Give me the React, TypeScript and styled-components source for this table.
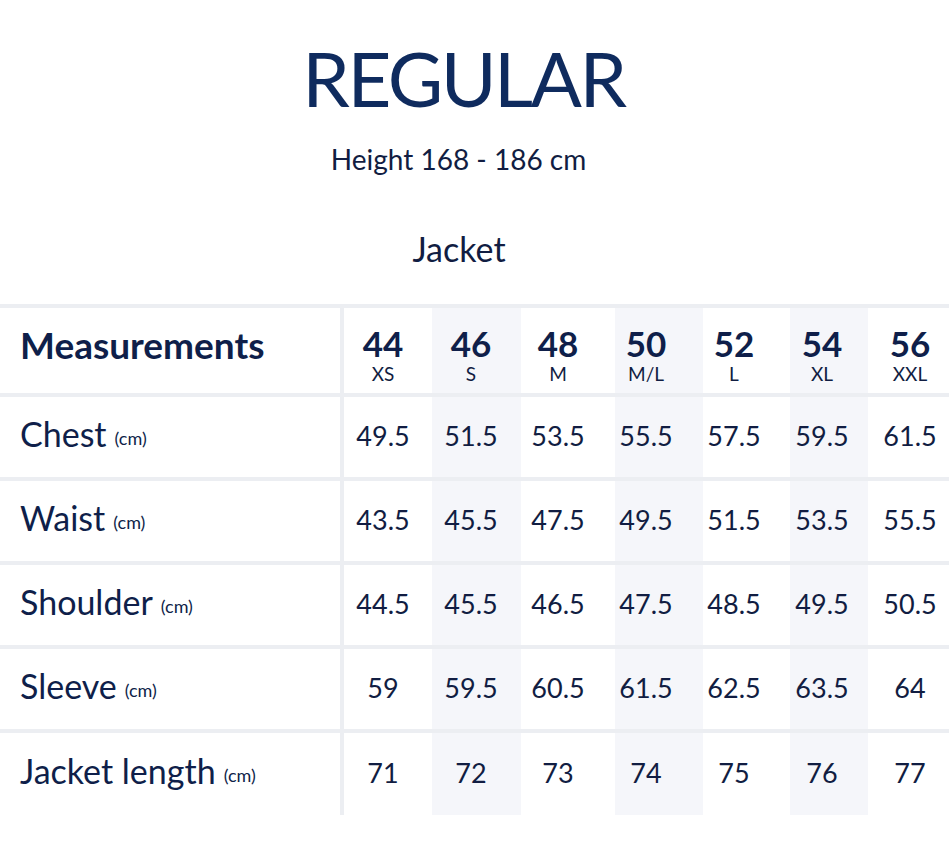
import styled, { createGlobalStyle } from "styled-components";

const GlobalStyle = createGlobalStyle`
  body {
    margin: 0;
    background: #ffffff;
    font-family: Lato, "Open Sans", sans-serif;
    color: #111d42;
  }
`;

const Page = styled.div`
  width: 949px;
  height: 868px;
  overflow: hidden;
  background: #ffffff;
`;

const Heading = styled.header`
  display: flex;
  flex-direction: column;
  align-items: center;
  padding-top: 40px;
`;

const Title = styled.h1`
  margin: 0 22px 0 0;
  font-size: 76px;
  font-weight: 400;
  letter-spacing: -2.5px;
  line-height: 1;
  color: #0f2b5e;
`;

const Subtitle = styled.div`
  margin: 29px 32px 0 0;
  font-size: 28px;
  line-height: 1;
`;

const Section = styled.h2`
  margin: 59px 31px 0 0;
  font-size: 34px;
  font-weight: 400;
  line-height: 1;
`;

const Table = styled.div`
  margin-top: 38px;
  display: flex;
  flex-direction: column;
`;

const COLS = "340px 4px 88px 89px 94px 88px 87px 78px 81px";

const Row = styled.div<{ $height: number }>`
  display: grid;
  grid-template-columns: ${COLS};
  height: ${(p) => p.$height}px;
  border-top: 4px solid #eceef2;
`;

const LabelCell = styled.div<{ $bold?: boolean }>`
  display: flex;
  align-items: center;
  padding: 0 0 ${(p) => (p.$bold ? 12 : 8)}px 20px;
  font-size: ${(p) => (p.$bold ? 37 : 34)}px;
  font-weight: ${(p) => (p.$bold ? 700 : 400)};
  color: #0f1f4a;
`;

const Unit = styled.span`
  font-size: 18px;
  margin-left: 8px;
  align-self: center;
  padding-top: 10px;
`;

const Divider = styled.div`
  background: #eceef2;
`;

const Cell = styled.div<{ $shade: boolean; $shift: number }>`
  display: flex;
  flex-direction: column;
  align-items: center;
  justify-content: center;
  background: ${(p) => (p.$shade ? "#f5f6fa" : "transparent")};
  padding-right: ${(p) => Math.max(0, -p.$shift * 2)}px;
  padding-left: ${(p) => Math.max(0, p.$shift * 2)}px;
  padding-bottom: 3px;
  font-size: 27px;
`;

const SizeCell = styled(Cell)`
  padding-top: 11px;
`;

const SizeNum = styled.div`
  font-size: 35px;
  font-weight: 700;
  line-height: 1;
  color: #0f1f4a;
`;

const SizeName = styled.div`
  margin-top: 3px;
  font-size: 19px;
  line-height: 1;
`;

const sizes = [
  { num: "44", name: "XS", shift: -5 },
  { num: "46", name: "S", shift: -5.5 },
  { num: "48", name: "M", shift: -10 },
  { num: "50", name: "M/L", shift: -13 },
  { num: "52", name: "L", shift: -12.5 },
  { num: "54", name: "XL", shift: -7 },
  { num: "56", name: "XXL", shift: 1.5 },
];

const rows = [
  { label: "Chest", values: ["49.5", "51.5", "53.5", "55.5", "57.5", "59.5", "61.5"] },
  { label: "Waist", values: ["43.5", "45.5", "47.5", "49.5", "51.5", "53.5", "55.5"] },
  { label: "Shoulder", values: ["44.5", "45.5", "46.5", "47.5", "48.5", "49.5", "50.5"] },
  { label: "Sleeve", values: ["59", "59.5", "60.5", "61.5", "62.5", "63.5", "64"] },
  { label: "Jacket length", values: ["71", "72", "73", "74", "75", "76", "77"] },
];

export default function App() {
  return (
    <Page>
      <GlobalStyle />
      <Heading>
        <Title>REGULAR</Title>
        <Subtitle>Height 168 - 186 cm</Subtitle>
        <Section>Jacket</Section>
      </Heading>
      <Table>
        <Row $height={85}>
          <LabelCell $bold>Measurements</LabelCell>
          <Divider />
          {sizes.map((s, i) => (
            <SizeCell key={s.num} $shade={i % 2 === 1} $shift={s.shift}>
              <SizeNum>{s.num}</SizeNum>
              <SizeName>{s.name}</SizeName>
            </SizeCell>
          ))}
        </Row>
        {rows.map((r, ri) => (
          <Row key={r.label} $height={ri === rows.length - 1 ? 82 : 80}>
            <LabelCell>
              {r.label}
              <Unit>(cm)</Unit>
            </LabelCell>
            <Divider />
            {r.values.map((v, i) => (
              <Cell key={i} $shade={i % 2 === 1} $shift={sizes[i].shift}>
                {v}
              </Cell>
            ))}
          </Row>
        ))}
      </Table>
    </Page>
  );
}
